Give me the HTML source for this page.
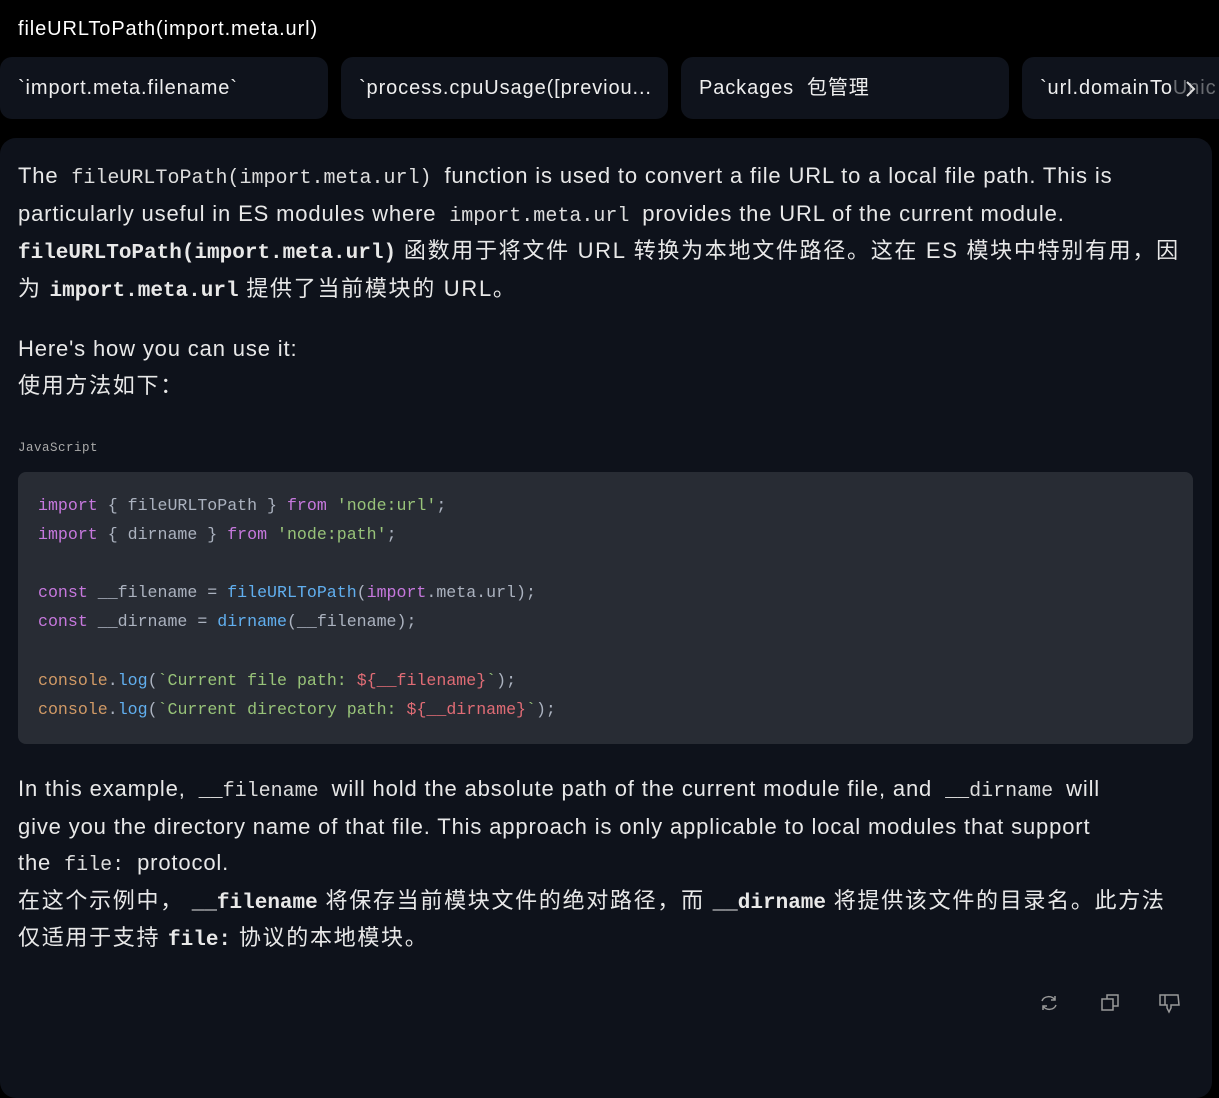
<!DOCTYPE html>
<html><head><meta charset="utf-8"><style>
*{margin:0;padding:0;box-sizing:border-box}
body{width:1219px;height:1040px;background:#000;overflow:hidden;position:relative;font-family:"Liberation Sans","Noto Sans CJK SC",sans-serif;color:#e8e8e8}
.a{position:absolute;white-space:nowrap}
.title{left:18px;top:17px;font-size:20px;line-height:24px;color:#fff;letter-spacing:.9px}
.chip{position:absolute;top:57px;height:62px;background:#0f131c;border-radius:12px;font-size:20px;line-height:24px;color:#eee;padding:19px 0 0 18px;white-space:nowrap;overflow:hidden;letter-spacing:.9px}
.card{position:absolute;left:0;top:138px;width:1212px;height:960px;background:#0e121b;border-radius:16px}
.p{font-size:22px;line-height:30px;left:18px;letter-spacing:.85px}
.z{letter-spacing:1.7px}
.ic{font-family:"Liberation Mono",monospace;font-size:20px;color:#ddd;margin:0 6px;letter-spacing:0}
.bc{font-family:"Liberation Mono",monospace;font-weight:bold;font-size:21px;letter-spacing:0}
.code{position:absolute;left:18px;top:472px;width:1175px;height:272px;background:#282c34;border-radius:8px}
.cl{position:absolute;left:38px;font-family:"Liberation Mono",monospace;font-size:16.6px;color:#abb2bf;white-space:pre}
.k{color:#c678dd}.s{color:#98c379}.f{color:#61afef}.o{color:#d19a66}.r{color:#e06c75}
</style></head><body>
<div class="a title">fileURLToPath(import.meta.url)</div>
<div class="chip" style="left:0;width:328px">`import.meta.filename`</div>
<div class="chip" style="left:341px;width:327px">`process.cpuUsage([previou...</div>
<div class="chip" style="left:681px;width:328px">Packages&nbsp; 包管理</div>
<div class="chip" style="left:1022px;width:220px">`url.domainTo<span style="opacity:.4">Unic</span></div>
<svg class="a" style="left:1184px;top:80px" width="14" height="18" viewBox="0 0 14 18"><path d="M3 2l7 7-7 7" fill="none" stroke="#ddd" stroke-width="2"/></svg>
<div class="card"></div>
<div class="a p" style="top:161px">The <span class="ic">fileURLToPath(import.meta.url)</span> function is used to convert a file URL to a local file path. This is</div>
<div class="a p" style="top:199px">particularly useful in ES modules where <span class="ic">import.meta.url</span> provides the URL of the current module.</div>
<div class="a p z" style="top:236px"><span class="bc">fileURLToPath(import.meta.url)</span> 函数用于将文件 URL 转换为本地文件路径。这在 ES 模块中特别有用，因</div>
<div class="a p z" style="top:274px">为 <span class="bc">import.meta.url</span> 提供了当前模块的 URL。</div>
<div class="a p" style="top:334px">Here's how you can use it:</div>
<div class="a p z" style="top:371px">使用方法如下：</div>
<div class="a" style="left:18px;top:441px;font-family:'Liberation Mono',monospace;font-size:12.5px;color:#aaa;letter-spacing:.5px">JavaScript</div>
<div class="code"></div>
<div class="cl" style="top:496px"><span class="k">import</span> { fileURLToPath } <span class="k">from</span> <span class="s">'node:url'</span>;</div>
<div class="cl" style="top:525px"><span class="k">import</span> { dirname } <span class="k">from</span> <span class="s">'node:path'</span>;</div>
<div class="cl" style="top:583px"><span class="k">const</span> __filename = <span class="f">fileURLToPath</span>(<span class="k">import</span>.meta.url);</div>
<div class="cl" style="top:612px"><span class="k">const</span> __dirname = <span class="f">dirname</span>(__filename);</div>
<div class="cl" style="top:671px"><span class="o">console</span>.<span class="f">log</span>(<span class="s">`Current file path: </span><span class="r">${__filename}</span><span class="s">`</span>);</div>
<div class="cl" style="top:700px"><span class="o">console</span>.<span class="f">log</span>(<span class="s">`Current directory path: </span><span class="r">${__dirname}</span><span class="s">`</span>);</div>
<div class="a p" style="top:774px">In this example, <span class="ic">__filename</span> will hold the absolute path of the current module file, and <span class="ic">__dirname</span> will</div>
<div class="a p" style="top:812px">give you the directory name of that file. This approach is only applicable to local modules that support</div>
<div class="a p" style="top:848px">the <span class="ic">file:</span> protocol.</div>
<div class="a p z" style="top:886px">在这个示例中， <span class="bc">__filename</span> 将保存当前模块文件的绝对路径，而 <span class="bc">__dirname</span> 将提供该文件的目录名。此方法</div>
<div class="a p z" style="top:923px">仅适用于支持 <span class="bc">file:</span> 协议的本地模块。</div>
<svg class="a" style="left:1039px;top:993px" width="20" height="20" viewBox="0 0 20 20" fill="none" stroke="#999" stroke-width="1.5"><path d="M3 8a7 6 0 0 1 13-1"/><path d="M16 3v4h-4"/><path d="M17 12a7 6 0 0 1-13 1"/><path d="M4 17v-4h4"/></svg>
<svg class="a" style="left:1100px;top:993px" width="20" height="20" viewBox="0 0 20 20" fill="none" stroke="#999" stroke-width="1.5"><rect x="2" y="6" width="11" height="11"/><path d="M7 6V2h11v11h-5"/></svg>
<svg class="a" style="left:1158px;top:993px" width="24" height="22" viewBox="0 0 24 22" fill="none" stroke="#999" stroke-width="1.5"><path d="M2 2h18l1 10h-8v3l-2 4-2-4V12H2z"/><path d="M7 2v10"/></svg>
</body></html>
